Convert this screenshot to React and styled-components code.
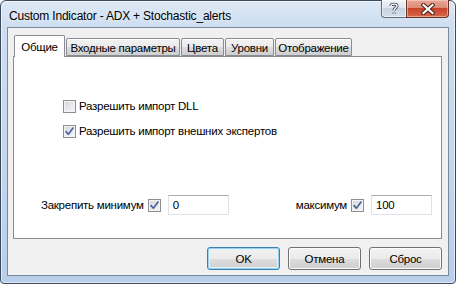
import React from "react";
import styled, { createGlobalStyle, css } from "styled-components";

const GlobalStyle = createGlobalStyle`
  html, body {
    margin: 0;
    padding: 0;
    background: #ffffff;
  }
  body {
    font-family: "Liberation Sans", Arial, sans-serif;
    font-size: 11.5px;
    letter-spacing: -0.25px;
    color: #000;
  }
`;

const Window = styled.div`
  box-sizing: border-box;
  width: 456px;
  height: 284px;
  border: 1px solid #3c4a5c;
  border-radius: 6px 6px 4px 4px;
  background: linear-gradient(to bottom, #dce8f5 0px, #cddef0 26px, #c2d6ed 60%, #b7cfeb 100%);
  box-shadow: inset 0 0 0 1px rgba(255, 255, 255, 0.55);
  display: flex;
  flex-direction: column;
  padding: 0 6px 7px 6px;
`;

const TitleBar = styled.div`
  height: 26px;
  display: flex;
  align-items: flex-start;
  justify-content: space-between;
`;

const Title = styled.div`
  padding: 8px 0 0 2px;
  font-size: 12px;
  letter-spacing: -0.2px;
  line-height: 14px;
  color: #000;
  text-shadow: 0 0 6px rgba(255, 255, 255, 0.9);
  white-space: nowrap;
`;

const CaptionButtons = styled.div`
  display: flex;
  margin-top: -1px;
`;

const captionBase = css`
  box-sizing: border-box;
  height: 18px;
  border: 1px solid #5e6b7c;
  border-top: none;
  display: flex;
  align-items: center;
  justify-content: center;
`;

const HelpButton = styled.div`
  ${captionBase}
  width: 25px;
  border-right: none;
  border-radius: 0 0 0 4px;
  background: linear-gradient(to bottom, #eef3f9 0%, #dde6f0 45%, #c7d3e1 50%, #d3dfec 100%);
  box-shadow: inset 0 0 0 1px rgba(255, 255, 255, 0.6);
`;

const CloseButton = styled.div`
  ${captionBase}
  width: 43px;
  border-radius: 0 0 4px 0;
  border-color: #6b3228;
  background: linear-gradient(to bottom, #e9a999 0%, #dd8a74 45%, #c8442b 50%, #d9664a 100%);
  box-shadow: inset 0 0 0 1px rgba(255, 220, 210, 0.5);
`;

const Client = styled.div`
  flex: 1;
  display: flex;
  flex-direction: column;
  background: #f0f0f0;
  border: 1px solid #7a889b;
`;

const TabStrip = styled.div`
  display: flex;
  align-items: flex-end;
  gap: 1px;
  height: 21px;
  margin: 7px 0 0 6px;
  position: relative;
  z-index: 1;
`;

const Tab = styled.div`
  box-sizing: border-box;
  width: ${(p) => p.$w}px;
  height: ${(p) => (p.$active ? 22 : 18)}px;
  margin-bottom: ${(p) => (p.$active ? -1 : 0)}px;
  border: 1px solid #898c95;
  border-bottom: ${(p) => (p.$active ? "none" : "1px solid #898c95")};
  border-radius: 2px 2px 0 0;
  display: flex;
  align-items: center;
  justify-content: center;
  padding-top: ${(p) => (p.$active ? 0 : 1)}px;
  color: #000;
  white-space: nowrap;
  background: ${(p) =>
    p.$active
      ? "#ffffff"
      : "linear-gradient(to bottom, #f2f2f2 0%, #ebebeb 50%, #dddddd 51%, #cfcfcf 100%)"};
  box-shadow: ${(p) => (p.$active ? "none" : "inset 0 1px 0 #fdfdfd")};
`;

const Pane = styled.div`
  box-sizing: border-box;
  height: 183px;
  margin: 0 6px 0 5px;
  background: #ffffff;
  border: 1px solid #898c95;
  display: flex;
  flex-direction: column;
`;

const CheckGroup = styled.div`
  display: flex;
  flex-direction: column;
  gap: 12px;
  padding: 43px 0 0 49px;
`;

const CheckRow = styled.label`
  display: flex;
  align-items: center;
  gap: 3px;
  height: 13px;
  line-height: 13px;
  white-space: nowrap;
`;

const Box = styled.span`
  box-sizing: border-box;
  flex: none;
  width: 13px;
  height: 13px;
  border: 1px solid #8f8f8f;
  background: linear-gradient(135deg, #d0d4da 0%, #e6e8ec 50%, #f6f6f6 100%);
  box-shadow: inset 0 0 0 1px #f4f4f4;
  display: flex;
  align-items: center;
  justify-content: center;
`;

const Checkbox = ({ checked }) => (
  <Box>
    {checked && (
      <svg width="9" height="9" viewBox="0 0 9 9">
        <path
          d="M1 4.6 L3.4 7.2 L8 1"
          fill="none"
          stroke="#4a5f9c"
          strokeWidth="1.6"
          strokeLinecap="round"
          strokeLinejoin="round"
        />
      </svg>
    )}
  </Box>
);

const LimitsRow = styled.div`
  display: flex;
  justify-content: space-between;
  align-items: center;
  margin-top: 57px;
  padding: 0 9px 0 27px;
`;

const Field = styled.div`
  display: flex;
  align-items: center;
`;

const FieldLabel = styled.span`
  white-space: nowrap;
  margin-right: 4px;
`;

const TextInput = styled.div`
  box-sizing: border-box;
  width: 61px;
  height: 20px;
  margin-left: 7px;
  padding: 2px 0 0 4px;
  background: #fff;
  border: 1px solid #dfe3e9;
  border-top-color: #abadb3;
  line-height: 14px;
`;

const Footer = styled.div`
  display: flex;
  justify-content: flex-end;
  gap: 8px;
  margin: 8px 6px 0 0;
`;

const Button = styled.div`
  box-sizing: border-box;
  width: 73px;
  height: 23px;
  border: 1px solid ${(p) => (p.$default ? "#3c7fb1" : "#707070")};
  border-radius: 3px;
  display: flex;
  align-items: center;
  justify-content: center;
  color: #000;
  background: linear-gradient(to bottom, #f2f2f2 0%, #ebebeb 50%, #dddddd 51%, #cfcfcf 100%);
  box-shadow: ${(p) =>
    p.$default ? "inset 0 0 0 1px #98d1ef, inset 0 0 0 2px #e4f3fb" : "inset 0 0 0 1px #fcfcfc"};
`;

const tabs = [
  { label: "Общие", w: 51, active: true },
  { label: "Входные параметры", w: 114 },
  { label: "Цвета", w: 43 },
  { label: "Уровни", w: 49 },
  { label: "Отображение", w: 77 },
];

export default function App() {
  return (
    <>
      <GlobalStyle />
      <Window>
        <TitleBar>
          <Title>Custom Indicator - ADX + Stochastic_alerts</Title>
          <CaptionButtons>
            <HelpButton>
              <svg width="10" height="13" viewBox="0 0 10 13">
                <path
                  d="M2 4 C2 1.5 8 1.5 8 4 C8 6 5 6 5 8.5 M5 10.5 L5 11.8"
                  fill="none"
                  stroke="#3e4a5a"
                  strokeWidth="3"
                />
                <path
                  d="M2 4 C2 1.5 8 1.5 8 4 C8 6 5 6 5 8.5 M5 10.5 L5 11.8"
                  fill="none"
                  stroke="#ffffff"
                  strokeWidth="1.4"
                />
              </svg>
            </HelpButton>
            <CloseButton>
              <svg width="14" height="12" viewBox="0 0 14 12">
                <path d="M2.5 2 L11.5 10 M11.5 2 L2.5 10" stroke="#4a1f18" strokeWidth="4.2" strokeLinecap="square" />
                <path d="M2.5 2 L11.5 10 M11.5 2 L2.5 10" stroke="#ffffff" strokeWidth="2.2" strokeLinecap="square" />
              </svg>
            </CloseButton>
          </CaptionButtons>
        </TitleBar>
        <Client>
          <TabStrip>
            {tabs.map((t) => (
              <Tab key={t.label} $w={t.w} $active={t.active}>
                {t.label}
              </Tab>
            ))}
          </TabStrip>
          <Pane>
            <CheckGroup>
              <CheckRow>
                <Checkbox />
                Разрешить импорт DLL
              </CheckRow>
              <CheckRow>
                <Checkbox checked />
                Разрешить импорт внешних экспертов
              </CheckRow>
            </CheckGroup>
            <LimitsRow>
              <Field>
                <FieldLabel>Закрепить минимум</FieldLabel>
                <Checkbox checked />
                <TextInput>0</TextInput>
              </Field>
              <Field>
                <FieldLabel>максимум</FieldLabel>
                <Checkbox checked />
                <TextInput>100</TextInput>
              </Field>
            </LimitsRow>
          </Pane>
          <Footer>
            <Button $default>OK</Button>
            <Button>Отмена</Button>
            <Button>Сброс</Button>
          </Footer>
        </Client>
      </Window>
    </>
  );
}
